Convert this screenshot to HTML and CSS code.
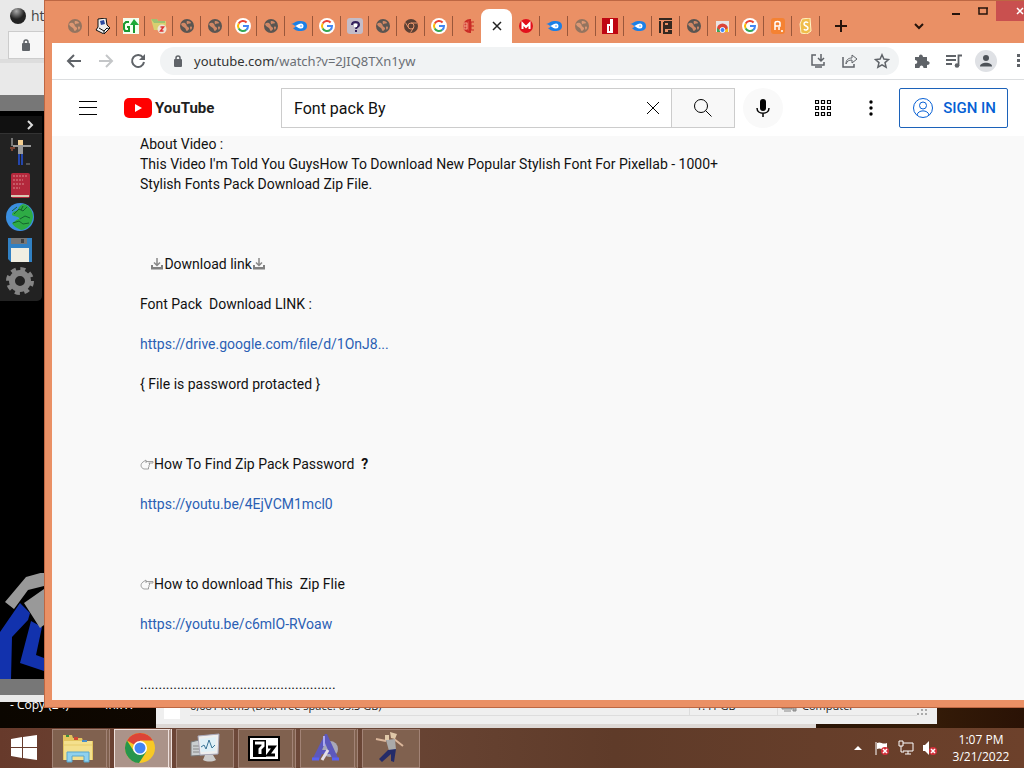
FILE: index.html
```html
<!DOCTYPE html>
<html lang="en">
<head>
  <meta charset="UTF-8">
  <title>YouTube</title>
  <link rel="stylesheet" href="styles.css">
</head>
<body>
  <!-- shared icons -->
  <svg class="sprite" aria-hidden="true">
    <symbol id="globe" viewBox="0 0 16 16">
      <circle cx="8" cy="8" r="7" fill="#5a5551"/>
      <path d="M2 6c2-2 4-1 5 0s0 2 2 3 1 3-1 4c-1 0-1-2-2-3S3 9 2 6zM8 3c2-.5 4 .8 4 2-1 1-2 0-3 1S7 4 8 3zM11 9c1-1 2 0 2 0 0 2-1 2-1 3-1-1-1-2-1-3z" fill="#d08866"/>
    </symbol>
    <symbol id="globe-light" viewBox="0 0 16 16">
      <circle cx="8" cy="8" r="7" fill="#94745f"/>
      <path d="M2 6c2-2 4-1 5 0s0 2 2 3 1 3-1 4c-1 0-1-2-2-3S3 9 2 6zM8 3c2-.5 4 .8 4 2-1 1-2 0-3 1S7 4 8 3zM11 9c1-1 2 0 2 0 0 2-1 2-1 3-1-1-1-2-1-3z" fill="#dd9874"/>
    </symbol>
    <symbol id="google" viewBox="0 0 16 16">
      <circle cx="8" cy="8" r="8" fill="#fff"/>
      <g fill="none" stroke-width="2">
        <path d="M3.7 5.5A5 5 0 0 1 11.6 4.5" stroke="#ea4335"/>
        <path d="M3.7 10.5A5 5 0 0 1 3.7 5.5" stroke="#fbbc05"/>
        <path d="M11.2 11.9A5 5 0 0 1 3.7 10.5" stroke="#34a853"/>
        <path d="M8 8h5a5 5 0 0 1-1.8 3.9" stroke="#4285f4"/>
      </g>
    </symbol>
    <symbol id="mediafire" viewBox="0 0 16 16">
      <path d="M0 6c3 0 4-3 8-3 5 0 8 1 8 5s-3 5-7 5c-4 0-5-1-7-3 2 0 2-1 2-2-1-1-2-2-4-2z" fill="#1b7fe6"/>
      <path d="M4 8c2 0 3-2.500 6-2.500a2.500 2.500 0 0 1 0 5C7 10.500 7 9 4 8z" fill="#fff"/>
      <circle cx="10" cy="8" r="1" fill="#8ac4ff"/>
    </symbol>
    <symbol id="download" viewBox="0 0 14 14">
      <path d="M7 1v7M4 5.500l3 3 3-3" fill="none" stroke="#888" stroke-width="1.500"/>
      <path d="M1 8h2v2h8V8h2v4.500H1z" fill="#808080"/>
    </symbol>
    <symbol id="hand" viewBox="0 0 14 14">
      <path d="M6 4.500h7v1.500H8.500M9.500 6v2M9 8v2M8.500 10v2H4C.5 11 0 7 3 5l3-2v3" fill="none" stroke="#8a8a8a" stroke-width=".8"/>
    </symbol>
    <symbol id="lock" viewBox="0 0 12 14">
      <rect x="2" y="5" width="8" height="8" rx="1" fill="#5f6368"/>
      <path d="M4 6V4a2 2 0 0 1 4 0v2" fill="none" stroke="#5f6368" stroke-width="1.500"/>
    </symbol>
  </svg>

  <div class="desktop">
    <div class="workspace">
      <div class="desktop-labels"><span>- Copy (24)</span><span>In.???</span></div>

      <!-- window on the left, behind the browser -->
      <section class="back-window">
        <div class="back-tab">
          <svg width="16" height="16" viewBox="0 0 16 16"><defs><radialGradient id="ball" cx=".4" cy=".2"><stop offset="0" stop-color="#aaa"/><stop offset="1" stop-color="#222"/></radialGradient></defs><circle cx="8" cy="8" r="8" fill="url(#ball)"/></svg>
          <span>ht</span>
        </div>
        <div class="back-address"><svg width="12" height="14"><use href="#lock"/></svg></div>
        <div class="back-gap"></div>
        <div class="game">
          <div class="tools">
            <button class="tools-toggle" aria-label="Collapse"><svg width="8" height="10" viewBox="0 0 8 10"><path d="M2 1l4 4-4 4" fill="none" stroke="#ddd" stroke-width="2"/></svg></button>
            <button class="tool" aria-label="Character">
              <svg viewBox="0 0 28 32"><path d="M6 1v8" stroke="#777" stroke-width="2"/><path d="M4 11h5M6 10v4" stroke="#7a4433" stroke-width="2"/><path d="M7 9h18" stroke="#999" stroke-width="2"/><path d="M12 8h5v9h-5z" fill="#999"/><path d="M12 3h5v5h-5z" fill="#f3cf92"/><path d="M12 17h2v11h-2zM15 17h2v11h-2z" fill="#2446ac"/><path d="M20 27h4" stroke="#888"/></svg>
            </button>
            <button class="tool" aria-label="Book">
              <svg viewBox="0 0 28 32"><rect x="5" y="4" width="19" height="25" rx="2" fill="#b3283c"/><path d="M5 26h18v2H5z" fill="#d9c8b4"/><path d="M7 7h15M7 11h10M7 15h12M7 19h7" stroke="#d98a8d" stroke-dasharray="2 1"/></svg>
            </button>
            <button class="tool" aria-label="World">
              <svg viewBox="0 0 28 32"><circle cx="14" cy="16" r="14" fill="#3b8fe0"/><path d="M17 3c6 1 10 7 10 13-1 8-7 13-12 13-4-2-8-4-9-7 3-1 4-4 7-4 1-3-5-2-7-4 0-5 5-3 6-6 1-2 2-4 5-5z" fill="#2eab45"/><path d="M6 10l5-4M8 13l5-5 4 2 4-4M14 18l5-3 5 2M7 22l6-2 4 3 6-1M17 5l-2 4" fill="none" stroke="#14632f"/></svg>
            </button>
            <button class="tool" aria-label="Save">
              <svg viewBox="0 0 28 32"><path d="M2 5h24v24H5l-3-3z" fill="#3181c4"/><path d="M5 5h16v6H5z" fill="#777"/><path d="M15 6h3v4h-3z" fill="#444"/><path d="M5 15h18v14H5z" fill="#f0eee2"/></svg>
            </button>
            <button class="tool" aria-label="Settings">
              <svg viewBox="0 0 28 32"><circle cx="14" cy="16" r="8" fill="none" stroke="#858585" stroke-width="6"/><circle cx="14" cy="16" r="12" fill="none" stroke="#858585" stroke-width="4" stroke-dasharray="5 4.420"/></svg>
            </button>
          </div>
          <svg class="fighter" viewBox="0 0 44 106">
            <path d="M20 30l10 10-2 7-16 17-1 42H0V59zM31 48l11 6-6 28 8 3v13l-24-8z" fill="#1232ad"/>
            <path d="M5 29L26 4l18-5v14l-16 4-14 19zM24 30l20-14v36l-4 3z" fill="#999"/>
          </svg>
        </div>
        <div class="back-foot"></div>
      </section>

      <!-- file manager status bar -->
      <div class="explorer-shadow"></div>
      <section class="explorer">
        <i class="explorer-box"></i>
        <span class="explorer-items">6,681 items (Disk free space: 65.3 GB)</span>
        <span class="explorer-size">1.41 GB</span>
        <span class="explorer-place"><svg width="16" height="14" viewBox="0 0 16 14"><path d="M1 2h10v8H1zM12 4h3v8h-3zM3 12h7" fill="#aaa" stroke="#888"/></svg>Computer</span>
        <svg class="grip" width="12" height="12" viewBox="0 0 12 12"><path d="M8 2h2v2H8zM4 6h2v2H4zM8 6h2v2H8zM0 10h2v2H0zM4 10h2v2H4zM8 10h2v2H8z" fill="#aaa"/></svg>
      </section>

      <!-- browser -->
      <main class="browser">
        <header class="tabstrip">
          <nav class="tabs">
            <button class="tab" aria-label="Tab"><svg><use href="#globe-light"/></svg></button>
            <button class="tab" aria-label="Tab"><svg viewBox="0 0 16 16"><path d="M3 1l8-1 1 7 3 3-6 6-8-4 2-3z" fill="#eee" stroke="#111"/><path d="M5 3l4-1 1 4-4 1z" fill="#2b49a0"/><path d="M4 10l5 3 3-3M9 13v2M12 10l2 1" fill="none" stroke="#111"/></svg></button>
            <button class="tab" aria-label="Tab"><svg viewBox="0 0 16 16"><path d="M0 0h16v16H0z" fill="#f4fff0"/><path d="M6 4H3L1 6v5l1 2h4V9H4M11 15V6" fill="none" stroke="#179a30" stroke-width="2"/><path d="M7 7l4-6 5 6z" fill="#1faa37"/></svg></button>
            <button class="tab" aria-label="Tab"><svg viewBox="0 0 16 16"><path d="M0 1h6l1 2h8v9H3z" fill="#d8cf70"/><path d="M0 1h6l1 2h7v2H3z" fill="#9dc272"/><circle cx="11" cy="11" r="4.500" fill="#eee3d4"/><path d="M9.500 9h3l-3 4h3" fill="none" stroke="#d33" stroke-width="1.500"/></svg></button>
            <button class="tab" aria-label="Tab"><svg><use href="#globe"/></svg></button>
            <button class="tab" aria-label="Tab"><svg><use href="#globe"/></svg></button>
            <button class="tab" aria-label="Tab"><svg><use href="#google"/></svg></button>
            <button class="tab" aria-label="Tab"><svg><use href="#globe"/></svg></button>
            <button class="tab" aria-label="Tab"><svg><use href="#mediafire"/></svg></button>
            <button class="tab" aria-label="Tab"><svg><use href="#google"/></svg></button>
            <button class="tab" aria-label="Tab"><svg viewBox="0 0 16 16"><rect width="16" height="16" rx="3" fill="#c3bcc8"/><path d="M5 7c0-4 7-4 7 0 0 2-3 2-3 4M9 12v2" fill="none" stroke="#33205c" stroke-width="2"/><path d="M7 6h3v3H7z" fill="#fff"/></svg></button>
            <button class="tab" aria-label="Tab"><svg><use href="#globe"/></svg></button>
            <button class="tab" aria-label="Tab"><svg viewBox="0 0 16 16"><circle cx="8" cy="8" r="7" fill="#5b4034"/><circle cx="8" cy="8" r="3" fill="none" stroke="#e8946b"/><path d="M8 5h6M5.400 9.500l-3-5M10.600 9.500l-3 5" stroke="#e8946b"/></svg></button>
            <button class="tab" aria-label="Tab"><svg><use href="#google"/></svg></button>
            <button class="tab tab-last" aria-label="Tab"><svg viewBox="0 0 16 16"><path d="M11 2A6 6 0 1 0 11 14z" fill="#d8473b" stroke="#c92b25" stroke-width="2"/><path d="M5 5h3v6H5zM5 8h3" fill="none" stroke="#f2a284"/><path d="M12 4v8h3M12 8h3M12 4h3" fill="none" stroke="#c92b25"/></svg></button>
            <button class="tab tab-active" aria-label="Close tab"><svg viewBox="0 0 16 16"><path d="M4 4l8 8M12 4l-8 8" stroke="#222" stroke-width="1.500"/></svg></button>
            <button class="tab" aria-label="Tab"><svg viewBox="0 0 16 16"><circle cx="8" cy="8" r="7" fill="#e2101c"/><path d="M4.500 11V5.500L8 9l3.500-3.500V11" fill="none" stroke="#fff" stroke-width="2"/></svg></button>
            <button class="tab" aria-label="Tab"><svg><use href="#mediafire"/></svg></button>
            <button class="tab" aria-label="Tab"><svg><use href="#globe-light"/></svg></button>
            <button class="tab" aria-label="Tab"><svg viewBox="0 0 16 16"><path d="M0 0h16v16H0z" fill="#bf0712"/><path d="M8 1h3v14H5V6h3zM7 8v5h1V8z" fill="#fff" fill-rule="evenodd"/></svg></button>
            <button class="tab" aria-label="Tab"><svg><use href="#mediafire"/></svg></button>
            <button class="tab" aria-label="Tab"><svg viewBox="0 0 16 16"><path d="M1 1h13M2 3v12M6 4h8M6 4v4h7V6h-3M14 10H6v5h7v-2h-3" fill="none" stroke="#332820" stroke-width="2"/></svg></button>
            <button class="tab" aria-label="Tab"><svg><use href="#globe"/></svg></button>
            <button class="tab" aria-label="Tab"><svg viewBox="0 0 16 16"><path d="M2 3h13v11H2z" fill="#e9e4e4"/><path d="M3 14V11a5 5 0 0 1 11 0v3z" fill="#dd4437"/><path d="M3 14v-4l5 4z" fill="#3aa757"/><path d="M14 14v-4l-5 4z" fill="#fbc116"/><circle cx="8.500" cy="12" r="2.500" fill="#4285f4" stroke="#fff"/></svg></button>
            <button class="tab" aria-label="Tab"><svg><use href="#google"/></svg></button>
            <button class="tab" aria-label="Tab"><svg viewBox="0 0 16 16"><rect x="1" width="14" height="16" rx="3" fill="#f58232"/><path d="M5 12V5c0-2 5-2 5 0v3H5M9 9v3M11 13h2" fill="none" stroke="#fff" stroke-width="1.500"/></svg></button>
            <button class="tab" aria-label="Tab"><svg viewBox="0 0 16 16"><path d="M4 1l8-1 1 13-4 3-6-1-1-9z" fill="#f0bd4c" stroke="#fff3c4"/><path d="M10 5c-1-2-4-1-4 1s4 2 4 4-3 3-4 1" fill="none" stroke="#fff" stroke-width="1.500"/></svg></button>
          </nav>
          <button class="new-tab" aria-label="New tab"><svg width="12" height="12" viewBox="0 0 12 12"><path d="M6 0v12M0 6h12" stroke="#26140c" stroke-width="2"/></svg></button>
          <button class="tab-search" aria-label="Search tabs"><svg width="10" height="8" viewBox="0 0 10 8"><path d="M1 2l4 4 4-4" fill="none" stroke="#26140c" stroke-width="2"/></svg></button>
          <div class="window-buttons">
            <button aria-label="Minimize"><svg width="8" height="8" viewBox="0 0 8 8"><path d="M0 7h8" stroke="#26140c" stroke-width="2"/></svg></button>
            <button aria-label="Maximize"><svg width="10" height="8" viewBox="0 0 10 8"><path d="M0 1h10M1 1v6h8V1" fill="none" stroke="#26140c" stroke-width="1.500"/></svg></button>
            <button class="window-close" aria-label="Close"><svg width="8" height="8" viewBox="0 0 8 8"><path d="M1 1l6 6M7 1L1 7" stroke="#fff" stroke-width="1.500"/></svg></button>
          </div>
        </header>

        <div class="toolbar">
          <button class="tb" aria-label="Back"><svg viewBox="0 0 16 16"><path d="M15 8H2M8 2L2 8l6 6" fill="none" stroke="#5f6368" stroke-width="2"/></svg></button>
          <button class="tb" aria-label="Forward"><svg viewBox="0 0 16 16"><path d="M1 8h13M8 2l6 6-6 6" fill="none" stroke="#c4c6c8" stroke-width="2"/></svg></button>
          <button class="tb" aria-label="Reload"><svg viewBox="0 0 16 16"><path d="M13 4.500A6 6 0 1 0 14 9" fill="none" stroke="#5f6368" stroke-width="2"/><path d="M15 1v6H9z" fill="#5f6368"/></svg></button>
          <div class="omnibox">
            <svg width="12" height="14"><use href="#lock"/></svg>
            <span class="url">youtube.com<span>/watch?v=2JIQ8TXn1yw</span></span>
            <button class="tb" aria-label="Install"><svg viewBox="0 0 16 16"><path d="M6 2H2v10h12v-3M5 14h7" fill="none" stroke="#5f6368" stroke-width="1.500"/><path d="M11 1v7M8 5l3 3 3-3" fill="none" stroke="#5f6368" stroke-width="1.500"/></svg></button>
            <button class="tb" aria-label="Share"><svg viewBox="0 0 16 16"><path d="M1 4v10h11v-3" fill="none" stroke="#5f6368" stroke-width="1.500"/><path d="M4 11c0-4 2-6 6-6V2l5 4-5 4V7c-3 0-5 1-6 4z" fill="none" stroke="#5f6368"/></svg></button>
            <button class="tb" aria-label="Bookmark"><svg viewBox="0 0 16 16"><path d="M8 1.800l1.900 4.300 4.600.4-3.500 3.100 1.100 4.600L8 11.800l-4.100 2.400L5 9.600 1.500 6.500l4.600-.4z" fill="none" stroke="#5f6368" stroke-width="1.500"/></svg></button>
          </div>
          <button class="tb" aria-label="Extensions"><svg viewBox="0 0 16 16"><path d="M1 4h4c-.5-3.500 4-3.500 4 0h4v4c3.500 0 3.500 4 0 4v3H9.500c0-3.500-4-3.500-4 0H1v-4c3 0 3-4 0-4z" fill="#5f6368"/></svg></button>
          <button class="tb" aria-label="Media"><svg viewBox="0 0 16 16"><path d="M0 3h10M0 7h10M0 11h6M12.500 13V2.500H16" fill="none" stroke="#5f6368" stroke-width="1.800"/><circle cx="11" cy="12.500" r="2.300" fill="#5f6368"/></svg></button>
          <button class="tb profile" aria-label="Profile"><svg viewBox="0 0 16 16"><circle cx="8" cy="5" r="3" fill="#4d5258"/><path d="M2 13.500c0-5 12-5 12 0z" fill="#4d5258"/></svg></button>
          <button class="tb tb-menu" aria-label="Menu"><svg viewBox="0 0 16 16"><path d="M7 1h3v3H7zM7 6h3v3H7zM7 11h3v3H7z" fill="#5f6368"/></svg></button>
        </div>

        <div class="masthead">
          <button class="guide" aria-label="Guide"><svg width="18" height="14" viewBox="0 0 18 14"><path d="M0 .5h18M0 6.500h18M0 13.500h18" stroke="#030303"/></svg></button>
          <a class="logo" href="#"><svg width="28" height="20" viewBox="0 0 28 20"><rect width="28" height="20" rx="5" fill="#f00"/><path d="M11 6l7 4-7 4z" fill="#fff"/></svg>YouTube</a>
          <form class="search">
            <input type="text" aria-label="Search" value="Font pack By">
            <button class="clear" type="reset" aria-label="Clear"><svg width="14" height="14" viewBox="0 0 14 14"><path d="M1 1l12 12M13 1L1 13" stroke="#030303"/></svg></button>
            <button class="go" type="button" aria-label="Search"><svg width="20" height="20" viewBox="0 0 20 20"><circle cx="8" cy="8" r="6.500" fill="none" stroke="#030303"/><path d="M12.500 12.500l6 6" stroke="#030303"/></svg></button>
          </form>
          <button class="mic" aria-label="Voice search"><svg width="14" height="20" viewBox="0 0 14 20"><rect x="4" y="1" width="6" height="12" rx="3" fill="#030303"/><path d="M1 10c0 7 12 7 12 0M7 15v4" fill="none" stroke="#030303" stroke-width="1.500"/></svg></button>
          <div class="actions">
            <button aria-label="Apps"><svg width="16" height="16" viewBox="0 0 16 16"><path d="M.5.500h3v3h-3zM6.500.500h3v3h-3zM12.500.500h3v3h-3zM.5 6.500h3v3h-3zM6.500 6.500h3v3h-3zM12.500 6.500h3v3h-3zM.5 12.500h3v3h-3zM6.500 12.500h3v3h-3zM12.500 12.500h3v3h-3z" fill="none" stroke="#030303" stroke-width="1.200"/></svg></button>
            <button aria-label="Settings"><svg width="4" height="16" viewBox="0 0 4 16"><circle cx="2" cy="2" r="1.700"/><circle cx="2" cy="8" r="1.700"/><circle cx="2" cy="14" r="1.700"/></svg></button>
            <a class="signin" href="#"><svg width="20" height="20" viewBox="0 0 20 20"><g fill="none" stroke="#065fd4"><circle cx="10" cy="10" r="9.500"/><circle cx="10" cy="7.500" r="3.500"/><path d="M4 17c1-5.500 11-5.500 12 0"/></g></svg>SIGN IN</a>
          </div>
        </div>

        <article class="page">
          <div class="description">
            <p class="section">About Video :<br>This Video I'm Told You GuysHow To Download New Popular Stylish Font For Pixellab - 1000+ Stylish Fonts Pack Download Zip File.</p>
            <p>   <svg class="emoji" width="14" height="14"><use href="#download"/></svg>Download link<svg class="emoji" width="14" height="14"><use href="#download"/></svg></p>
            <p>Font Pack  Download LINK :</p>
            <p><a href="#">https://drive.google.com/file/d/1OnJ8...</a></p>
            <p class="section">{ File is password protacted }</p>
            <p><svg class="emoji" width="14" height="14"><use href="#hand"/></svg>How To Find Zip Pack Password  <b>?</b></p>
            <p class="section"><a href="#">https://youtu.be/4EjVCM1mcl0</a></p>
            <p><svg class="emoji" width="14" height="14"><use href="#hand"/></svg>How to download This  Zip Flie</p>
            <p class="last-link"><a href="#">https://youtu.be/c6mlO-RVoaw</a></p>
            <p>.....................................................</p>
          </div>
        </article>
      </main>
    </div>

    <footer class="taskbar">
      <button class="start" aria-label="Start"><svg width="26" height="26" viewBox="0 0 26 26"><path d="M0 4l11-2v10H0zM12 2l14-2v12H12zM0 13h11v10L0 21zM12 13h14v12l-14-2z" fill="#fff"/></svg></button>
      <nav class="tasks">
        <button class="task stacked" aria-label="Files"><svg viewBox="0 0 32 32"><path d="M1 3h9l1 3h9l1 3h10v19H1z" fill="#e3c45e"/><path d="M2 9h28v19H2z" fill="#f4e08d"/><path d="M2 13h28" stroke="#e7cc6a"/><path d="M4 3h3v2H4z" fill="#3c8d40"/><path d="M12 5h4v3h-4z" fill="#ce4836"/><path d="M20 8h5v2h-5z" fill="#4a8dc7"/><path d="M5 30V20h22v10h-5v-6H10v6z" fill="#8fd1ee" stroke="#59a6cc"/></svg></button>
        <button class="task stacked current" aria-label="Chrome"><svg viewBox="0 0 32 32"><circle cx="16" cy="16" r="15" fill="#f7c926"/><path d="M16 16L3 8.500A15 15 0 0 1 29 8.500H16z" fill="#dc4437"/><path d="M3 8.500A15 15 0 0 0 15 31l7.500-11.500H10z" fill="#26954c"/><circle cx="16" cy="16" r="7" fill="#fff"/><circle cx="16" cy="16" r="5.500" fill="#4285f4"/></svg></button>
        <button class="task" aria-label="Task Manager"><svg viewBox="0 0 32 32"><path d="M2 10l12-3 2 16-14 1z" fill="#c9ced0" stroke="#777"/><path d="M4 14h8M4 17h8M4 20h8" stroke="#888"/><path d="M9 4l21-2-1 20-18 1z" fill="#eee" stroke="#aab"/><path d="M11 7l16-2-1 14-14 1z" fill="#dff0f7"/><path d="M12 15l3-2 2 4 3-9 3 8 3-3" fill="none" stroke="#3a7597"/><path d="M16 23h8l3 5c-4 2-9 2-13 0z" fill="#ccc"/></svg></button>
        <button class="task stacked" aria-label="7-Zip"><svg viewBox="0 0 32 32"><path d="M1 5h30v23H1z" fill="#fff" stroke="#000" stroke-width="2"/><path d="M5 8h13v17H5z" fill="#000"/><path d="M7 11h8v3l-3 3v5" fill="none" stroke="#fff" stroke-width="3"/><path d="M20 15h6l-6 8h7" fill="none" stroke="#000" stroke-width="3"/></svg></button>
        <button class="task stacked" aria-label="Model editor"><svg viewBox="0 0 32 32"><circle cx="20" cy="17" r="8" fill="#a8a8b8"/><path d="M15 2L2 28h7l3-6h8l3 6h6L17 2zM15 11l3 7h-6z" fill="#5c58bc" fill-rule="evenodd"/><path d="M12 28l6-10" stroke="#e3dfe6" stroke-width="3"/><path d="M2 27h7M22 27h7" stroke="#5a62f0" stroke-width="3"/><path d="M14 4v10" stroke="#aaa8f2" stroke-width="2"/></svg></button>
        <button class="task" aria-label="Game"><svg viewBox="0 0 32 32"><path d="M1 7l10 2M19 7l9 7" fill="none" stroke="#dab69b" stroke-width="2"/><path d="M11 8l9-1 1 11-7 1z" fill="#aaa"/><path d="M10 3h4v5h-4zM15 0l7 2-2 5-4-1z" fill="#dfc8a8"/><path d="M13 18l8-1-2 13-3-1v-7l-9 8-3-3z" fill="#242b68"/></svg></button>
      </nav>
      <div class="tray">
        <svg width="8" height="6" viewBox="0 0 8 6"><path d="M0 5l4-4 4 4z" fill="#fff"/></svg>
        <svg width="16" height="16" viewBox="0 0 16 16"><path d="M2 2v13" stroke="#fff"/><path d="M3 3c4-2 5 2 10 0v6c-5 2-6-2-10 0z" fill="#fff"/><circle cx="11" cy="11" r="4" fill="#d3303a"/><path d="M9 9l4 4M13 9l-4 4" stroke="#fff" stroke-width="1.500"/></svg>
        <svg width="16" height="16" viewBox="0 0 16 16"><path d="M5 3h10v8H5M10 11v3M7 14h6M3 6v6h3" fill="none" stroke="#fff"/><path d="M1 1h4v5H1z" fill="none" stroke="#fff"/></svg>
        <svg width="16" height="16" viewBox="0 0 16 16"><path d="M1 5h2l4-4v14l-4-4H1z" fill="#fff"/><circle cx="11" cy="11" r="4" fill="#d3303a"/><path d="M9 9l4 4M13 9l-4 4" stroke="#fff" stroke-width="1.500"/></svg>
      </div>
      <div class="clock"><span>1:07 PM</span><span>3/21/2022</span></div>
    </footer>
  </div>
</body>
</html>
```
FILE: styles.css
```css
* {
  box-sizing: border-box;
}
body {
  margin: 0;
  overflow: hidden;
  font-family: Roboto, sans-serif;
  font-size: 14px;
}
button {
  display: flex;
  align-items: center;
  justify-content: center;
  padding: 0;
  border: none;
  background: none;
  cursor: pointer;
}
a {
  text-decoration: none;
}
svg {
  flex: none;
}
.sprite {
  position: absolute;
  width: 0;
  height: 0;
}
.desktop {
  display: flex;
  flex-direction: column;
  height: 100vh;
  background: linear-gradient(90deg, #0b0600, #1e0d02 70%, #351c08 90%, #2a1205);
}
.workspace {
  position: relative;
  flex: 1;
  overflow: hidden;
}

/* windows behind */
.desktop-labels {
  position: absolute;
  left: 10px;
  bottom: 14px;
  display: flex;
  gap: 36px;
  color: #fff;
  font: 12px/18px "Open Sans", sans-serif;
}
.back-window {
  position: absolute;
  left: 0;
  top: 0;
  bottom: 26px;
  width: 52px;
  display: flex;
  flex-direction: column;
  background: #e9e9e9;
}
.back-tab {
  display: flex;
  align-items: center;
  gap: 5px;
  height: 31px;
  padding-left: 10px;
  color: #444;
  font: 14px "Open Sans", sans-serif;
}
.back-address {
  display: flex;
  align-items: center;
  height: 28px;
  margin-left: 8px;
  padding-left: 11px;
  border: 1px solid #ccc;
  background: #f7f7f7;
}
.back-gap {
  height: 36px;
  border-top: 4px solid #ddd;
}
.game {
  display: flex;
  flex: 1;
  flex-direction: column;
  justify-content: space-between;
  padding-top: 5px;
  border-top: 16px solid #777;
  border-bottom: 16px solid #777;
  background: #000;
}
.tools {
  width: 42px;
  height: 185px;
  border-radius: 0 5px 5px 0;
  background: #222;
}
.tools-toggle {
  width: 42px;
  height: 18px;
  padding-left: 18px;
  border-bottom: 1px solid #333;
  background: #111;
}
.tool {
  width: 28px;
  height: 32px;
  margin-left: 6px;
}
.tools-toggle + .tool {
  margin-top: 3px;
}
.tool svg {
  width: 28px;
  height: 32px;
}
.fighter {
  width: 44px;
  height: 106px;
}
.back-foot {
  height: 7px;
}
.explorer,
.explorer-shadow {
  position: absolute;
  left: 156px;
  right: 87px;
  bottom: 4px;
  height: 30px;
  background: #efefef;
}
.explorer-shadow {
  right: 208px;
  bottom: 0;
  background: #ddd8d5;
}
.explorer {
  display: flex;
  align-items: center;
  padding: 0 8px 6px;
  color: #222;
  font: 11px/18px "Open Sans", sans-serif;
}
.explorer-box {
  width: 16px;
  height: 26px;
  margin-right: 10px;
  background: #fff;
}
.explorer-items {
  flex: 1;
}
.explorer-items,
.explorer-size,
.explorer-place {
  border-bottom: 1px solid #ddd;
}
.explorer-size {
  width: 88px;
  padding-left: 6px;
  border-left: 1px solid #ddd;
}
.explorer-place {
  display: flex;
  align-items: center;
  gap: 5px;
  width: 140px;
  padding-left: 3px;
  border-left: 1px solid #ddd;
}
.grip {
  margin-top: 6px;
}

/* browser window */
.browser {
  position: absolute;
  left: 44px;
  right: 0;
  top: 0;
  bottom: 20px;
  display: flex;
  flex-direction: column;
  padding: 0 0 7px 7px;
  border: 1px solid #bd6743;
  border-right: none;
  background: #ea9065;
}
.tabstrip {
  display: flex;
  height: 42px;
  padding-left: 9px;
}
.tabs {
  display: flex;
  align-items: flex-end;
}
.tab {
  position: relative;
  width: 28px;
  height: 34px;
}
.tab svg {
  width: 16px;
  height: 16px;
}
.tab::after {
  content: "";
  position: absolute;
  right: 0;
  top: 7px;
  width: 1px;
  height: 20px;
  background: #99573b;
}
.tab-last::after,
.tab-active::after {
  display: none;
}
.tab-active {
  width: 31px;
  border-radius: 8px 8px 0 0;
  background: #fff;
}
.new-tab {
  width: 28px;
  margin: 8px 0 0 7px;
}
.tab-search {
  width: 28px;
  margin: 8px 0 0 auto;
}
.window-buttons {
  display: flex;
  height: 20px;
  margin-left: 9px;
}
.window-buttons button {
  width: 27px;
}
.window-buttons .window-close {
  width: 28px;
  justify-content: flex-end;
  background: #c9504f;
}
.toolbar {
  display: flex;
  align-items: center;
  height: 37px;
  padding-left: 6px;
  border-bottom: 1px solid #dcdee0;
  background: #fff;
}
.tb {
  width: 32px;
  height: 28px;
}
.tb svg {
  width: 16px;
  height: 16px;
}
.omnibox {
  display: flex;
  flex: 1;
  align-items: center;
  height: 28px;
  margin: 0 7px 0 6px;
  padding: 0 1px 0 12px;
  border-radius: 14px;
  background: #f1f3f4;
}
.url {
  flex: 1;
  margin-left: 10px;
  color: #333;
  font: 13px "Noto Sans", sans-serif;
}
.url span {
  color: #6b6f74;
}
.profile {
  width: 22px;
  height: 22px;
  margin: 0 15px 0 5px;
  border-radius: 50%;
  background: #dfe1e5;
}
.tb-menu {
  width: 12px;
}
.masthead {
  z-index: 1;
  display: flex;
  align-items: center;
  height: 56px;
  padding: 0 16px 0 27px;
  background: #fff;
}
.logo {
  display: flex;
  align-items: center;
  gap: 3px;
  width: 92px;
  margin-left: 27px;
  color: #212121;
  font: bold 15px Roboto, sans-serif;
}
.search {
  display: flex;
  flex: 1;
  height: 40px;
  margin-left: 65px;
  border: 1px solid #ccc;
}
.search input {
  flex: 1;
  min-width: 0;
  padding: 0 12px;
  border: none;
  color: #111;
  font: 16px Roboto, sans-serif;
}
.clear {
  width: 36px;
}
.go {
  width: 63px;
  border-left: 1px solid #ccc;
  background: #f8f8f8;
}
.mic {
  width: 40px;
  height: 40px;
  margin-left: 8px;
  border-radius: 50%;
  background: #f9f9f9;
}
.actions {
  display: flex;
  align-items: center;
  margin-left: 20px;
}
.actions button {
  width: 40px;
  height: 40px;
  margin-right: 8px;
}
.signin {
  display: flex;
  align-items: center;
  gap: 10px;
  height: 40px;
  padding: 0 11px 0 13px;
  border: 1px solid #1c62b9;
  border-radius: 2px;
  color: #065fd4;
  font-size: 15px;
  font-weight: 500;
}
.page {
  flex: 1;
  min-height: 0;
  padding-left: 88px;
  overflow: hidden;
  background: #f9f9f9;
}
.description {
  width: 615px;
  margin-top: -2px;
  color: #111;
  line-height: 20px;
}
.description p {
  margin: 0 0 20px;
  white-space: pre-wrap;
}
.description .section {
  margin-bottom: 60px;
}
.description .last-link {
  margin-bottom: 40px;
}
.description a {
  color: #2b5fb4;
}
.emoji {
  vertical-align: -2px;
}

/* taskbar */
.taskbar {
  display: flex;
  align-items: center;
  height: 40px;
  color: #fff;
  background: linear-gradient(90deg, #673a2b, #6e4a3b 25%, #5f3b29 60%, #6d412b);
}
.start {
  width: 48px;
  height: 40px;
}
.tasks {
  display: flex;
  flex: 1;
  gap: 4px;
  padding-left: 4px;
}
.task {
  width: 58px;
  height: 39px;
  border: 1px solid #a28376;
  background: #80614f;
}
.task svg {
  width: 32px;
  height: 32px;
}
.stacked {
  padding-right: 4px;
  border-right: 4px double #a28376;
}
.current {
  border-color: #eee0dc;
  background: #ab9389;
}
.tray {
  display: flex;
  align-items: center;
  gap: 8px;
}
.tray svg:first-child {
  margin-right: 4px;
}
.clock {
  display: flex;
  flex-direction: column;
  width: 86px;
  text-align: center;
  font: 12px/17px "Open Sans", sans-serif;
}
```
